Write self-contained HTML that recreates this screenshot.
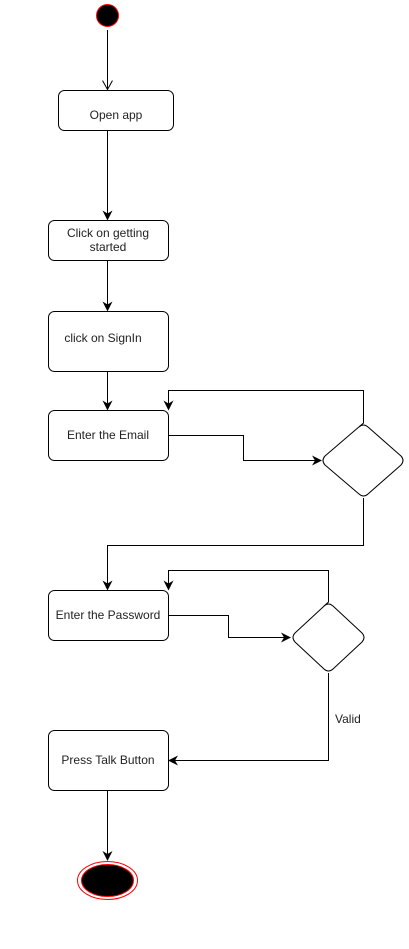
<!DOCTYPE html>
<html><head><meta charset="utf-8"><style>
html,body{margin:0;padding:0;background:#fff;}
svg{display:block;}
text{font-family:"Liberation Sans",sans-serif;font-size:12px;fill:#222;}
</style></head><body>
<svg width="409" height="949" viewBox="0 0 409 949" xmlns="http://www.w3.org/2000/svg">
<defs>
<marker id="a" markerWidth="10" markerHeight="10" refX="9" refY="5" orient="auto" markerUnits="userSpaceOnUse">
<path d="M0,0 L10,5 L0,10 L3,5 Z" fill="#000"/>
</marker>
<marker id="o" markerWidth="10" markerHeight="12" refX="9" refY="6" orient="auto" markerUnits="userSpaceOnUse">
<path d="M0,1 L9,6 L0,11" fill="none" stroke="#000" stroke-width="1"/>
</marker>
</defs>
<g fill="none" stroke="#000" stroke-width="1">
<circle cx="107.5" cy="15.5" r="11" fill="#000" stroke="#f00"/>
<path d="M107.5 30 V89.5" marker-end="url(#o)"/>
<rect x="58.5" y="90.5" width="115" height="40" rx="6"/>
<path d="M107.5 130.5 V219.5" marker-end="url(#a)"/>
<rect x="48.5" y="220.5" width="120" height="40" rx="6"/>
<path d="M107.5 260.5 V310.5" marker-end="url(#a)"/>
<rect x="48.5" y="311.5" width="120" height="60" rx="6"/>
<path d="M107.5 371.5 V409.5" marker-end="url(#a)"/>
<rect x="48.5" y="410.5" width="120" height="50" rx="6"/>
<path d="M168.5 435.5 H243.5 V460.5 H321" marker-end="url(#a)"/>
<path d="M363.5 423 L325 456 Q321 460.5 325 465 L359 494 Q363.5 498 368 494 L401 465 Q405 460.5 401 456 L368 427 Q363.5 423 359 427 Z" stroke-linejoin="round"/>
<path d="M363.5 423 V390.5 H168.5 V409.5" marker-end="url(#a)"/>
<path d="M363.5 498 V545.5 H107.5 V589.5" marker-end="url(#a)"/>
<rect x="48.5" y="590.5" width="120" height="50" rx="6"/>
<path d="M168.5 615.5 H228.5 V637.5 H290" marker-end="url(#a)"/>
<path d="M328.5 602 L295 633 Q291 637.5 295 642 L324 669 Q328.5 673 333 669 L362 642 Q366 637.5 362 633 L333 606 Q328.5 602 324 606 Z" stroke-linejoin="round"/>
<path d="M328.5 602 V570.5 H168.5 V589.5" marker-end="url(#a)"/>
<path d="M328.5 673 V760.5 H169" marker-end="url(#a)"/>
<rect x="48.5" y="730.5" width="120" height="60" rx="6"/>
<path d="M107.5 790.5 V860" marker-end="url(#a)"/>
<ellipse cx="107.5" cy="880.5" rx="30" ry="19" fill="#fff" stroke="#f00"/>
<ellipse cx="107.5" cy="880.5" rx="26" ry="16" fill="#000" stroke="#f00"/>
</g>
<text x="116" y="119" text-anchor="middle">Open app</text>
<text x="108" y="237" text-anchor="middle">Click on getting</text>
<text x="108" y="251" text-anchor="middle">started</text>
<text x="103" y="342" text-anchor="middle">click on SignIn</text>
<text x="108" y="439" text-anchor="middle">Enter the Email</text>
<text x="108" y="619" text-anchor="middle">Enter the Password</text>
<text x="108" y="764" text-anchor="middle">Press Talk Button</text>
<text x="335" y="723">Valid</text>
</svg>
</body></html>
